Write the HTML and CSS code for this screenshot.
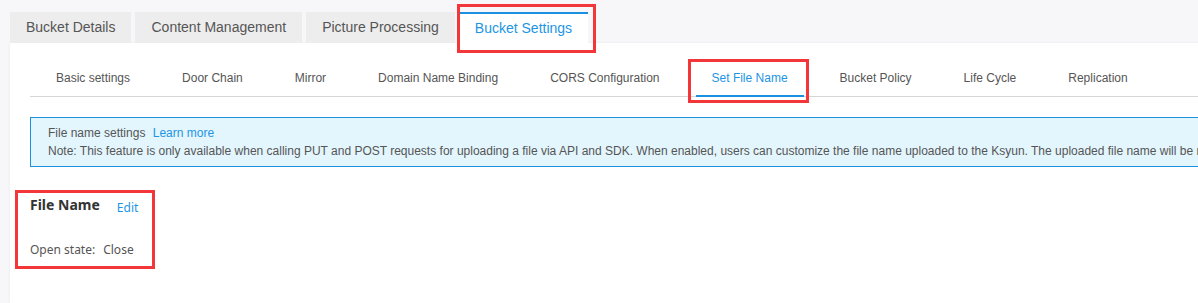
FILE: index.html
```html
<!DOCTYPE html>
<html lang="en">
<head>
  <meta charset="UTF-8" />
  <title>Bucket Settings</title>
  <link rel="stylesheet" href="styles.css">
</head>
<body>

  <div class="page">
    <div class="tabs">
      <a class="tab">Bucket Details</a>
      <a class="tab">Content Management</a>
      <a class="tab">Picture Processing</a>
      <a class="tab active mark">Bucket Settings</a>
    </div>

    <div class="card">
      <div class="subnav">
        <a class="subtab">Basic settings</a>
        <a class="subtab">Door Chain</a>
        <a class="subtab">Mirror</a>
        <a class="subtab">Domain Name Binding</a>
        <a class="subtab">CORS Configuration</a>
        <a class="subtab active mark">Set File Name</a>
        <a class="subtab">Bucket Policy</a>
        <a class="subtab">Life Cycle</a>
        <a class="subtab">Replication</a>
      </div>

      <div class="notice">
        <div>File name settings <a class="link">Learn more</a></div>
        <div>Note: This feature is only available when calling PUT and POST requests for uploading a file via API and SDK. When enabled, users can customize the file name uploaded to the Ksyun. The uploaded file name will be modified according to the rules you set.</div>
      </div>

      <div class="field mark">
        <div class="field-head">
          <span class="field-title">File Name</span>
          <a class="link edit">Edit</a>
        </div>
        <div class="field-row">
          <span class="field-label">Open state:</span>Close
        </div>
      </div>
    </div>
  </div>

</body>
</html>
```

FILE: styles.css
```css
html,
body {
  margin: 0;
  overflow: hidden;
}

body {
  background: #f7f7f9;
  font-family: "Liberation Sans", Arial, sans-serif;
  color: #555;
  height: 303px;
}

.page {
  width: 1700px;
  padding: 12px 0 0 10px;
}

/* Top level tabs */
.tabs {
  display: flex;
  gap: 4px;
}

.tab {
  height: 31px;
  line-height: 31px;
  padding: 0 16px;
  background: #ededed;
  font-size: 14px;
  color: #555;
  cursor: pointer;
}

.tab.active {
  background: #fff;
  color: #1d95e4;
  border-top: 2px solid #1a90e0;
  height: 29px;
  line-height: 29px;
  padding: 0 16px;
}

/* Red annotation frames */
.mark {
  position: relative;
}

.mark::after {
  content: "";
  position: absolute;
  border: 3px solid #f2363a;
  z-index: 2;
}

.tab.mark::after {
  top: -10px;
  left: -2px;
  right: -8px;
  bottom: -10px;
}

.subtab.mark::after {
  top: -2px;
  left: -8px;
  right: -5px;
  bottom: -8px;
}

.field.mark::after {
  top: -5px;
  left: -15px;
  right: -17px;
  bottom: -9px;
}

.card {
  background: #fff;
  padding: 0 20px;
  height: 260px;
  box-shadow: 0 0 3px rgba(0, 0, 0, 0.06);
}

/* Second level tabs */
.subnav {
  display: flex;
  gap: 20px;
  padding-left: 10px;
  padding-top: 18px;
  border-bottom: 1px solid #d6d6d6;
}

.subtab {
  padding: 0 16px;
  line-height: 34px;
  font-size: 12px;
  color: #555;
  border-bottom: 2px solid transparent;
  margin-bottom: -1px;
  white-space: nowrap;
  cursor: pointer;
}

.subtab.active {
  color: #1d95e4;
  border-bottom-color: #1a90e0;
}

.notice {
  margin-top: 20px;
  padding: 6px 17px;
  background: #e3f5fd;
  border: 1px solid #1a90e0;
  font-size: 12px;
  line-height: 18px;
  color: #555;
  white-space: nowrap;
}

.link {
  color: #1d95e4;
  cursor: pointer;
}

.notice .link {
  margin-left: 4px;
}

.field {
  display: inline-block;
  margin-top: 28px;
  font-family: "Noto Sans", "Liberation Sans", sans-serif;
}

.field-head {
  display: flex;
  align-items: baseline;
  line-height: 20px;
}

.field-title {
  font-size: 14px;
  font-weight: bold;
  color: #333;
}

.edit {
  font-size: 12px;
  margin-left: 17px;
  position: relative;
  top: 2px;
}

.field-row {
  margin-top: 24px;
  font-size: 12px;
  line-height: 20px;
  color: #555;
}

.field-label {
  margin-right: 8px;
}
```
